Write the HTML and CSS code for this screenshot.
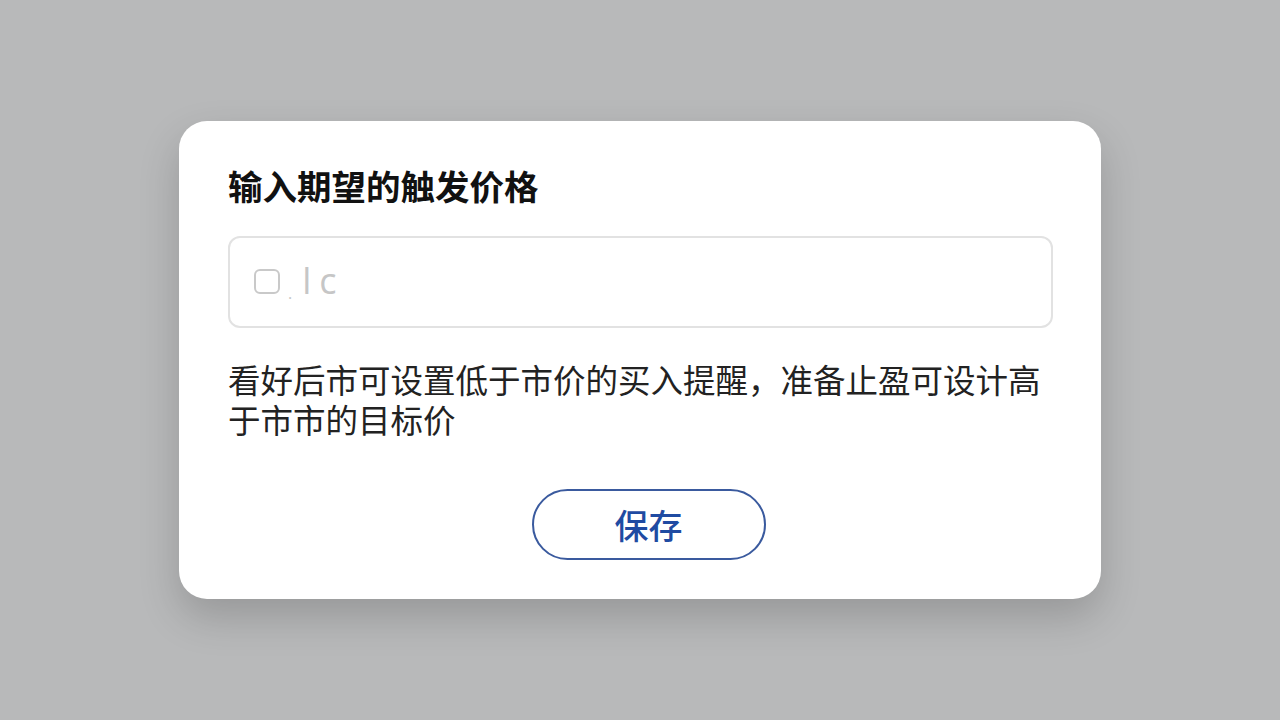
FILE: index.html
```html
<!DOCTYPE html>
<html lang="zh-CN">

<head>
    <meta charset="UTF-8">
    <meta name="viewport" content="width=device-width, initial-scale=1.0">
    <title>触发价格</title>
    <link rel="stylesheet" href="styles.css">
</head>

<body>

    <article class="dialog">
        <h2 class="dialog-title">输入期望的触发价格</h2>

        <div class="price-input">
            <span class="placeholder"><span class="box"></span><i>.</i><b>l</b>c</span>
        </div>

        <p class="dialog-tip">看好后市可设置低于市价的买入提醒，准备止盈可设计高于市市的目标价</p>

        <div class="actions">
            <button class="btn-save">保存</button>
        </div>
    </article>

</body>

</html>
```

FILE: styles.css
```css
* {
    box-sizing: border-box;
}

body {
    font-family: "Noto Sans CJK SC", "Noto Sans", sans-serif;
    display: grid;
    height: 100vh;
    width: 100vw;
    place-items: center;
    margin: 0;
    background-color: #b8b9ba;
}

.dialog {
    width: 922px;
    height: 478px;
    padding: 42px 48px 0 49px;
    background-color: #fff;
    border-radius: 28px;
    box-shadow: 0 18px 40px hsla(0, 0%, 0%, .18);
}

.dialog-title {
    margin: 0;
    font-size: 34.5px;
    line-height: 44px;
    font-weight: 700;
    color: #111;
}

.price-input {
    margin-top: 29px;
    height: 92px;
    border: 2px solid #e2e2e2;
    border-radius: 12px;
    display: flex;
    align-items: center;
    padding-left: 24px;
}

.placeholder {
    font-family: "Open Sans", "Liberation Sans", sans-serif;
    font-size: 36px;
    line-height: 36px;
    font-weight: 400;
    color: #c6c6c6;
    margin-top: 10px;
}

.placeholder .box {
    display: inline-block;
    width: 26px;
    height: 25px;
    border: 2.5px solid #c9c9c9;
    border-radius: 6px;
}

.placeholder i {
    font-style: normal;
    font-size: 16px;
    vertical-align: -5px;
    margin: 0 10px 0 8px;
}

.placeholder b {
    font-weight: 400;
    margin-right: 8px;
}

.dialog-tip {
    margin: 31px 0 0;
    font-size: 32.5px;
    line-height: 40px;
    color: #222;
}

.actions {
    display: flex;
    justify-content: center;
    margin-top: 50px;
}

.btn-save {
    width: 234px;
    height: 71px;
    border: 2px solid #3a5a9e;
    border-radius: 36px;
    background-color: #fff;
    font-family: inherit;
    font-size: 34px;
    font-weight: 500;
    color: #1f4ba2;
    margin-left: 16px;
}
```
